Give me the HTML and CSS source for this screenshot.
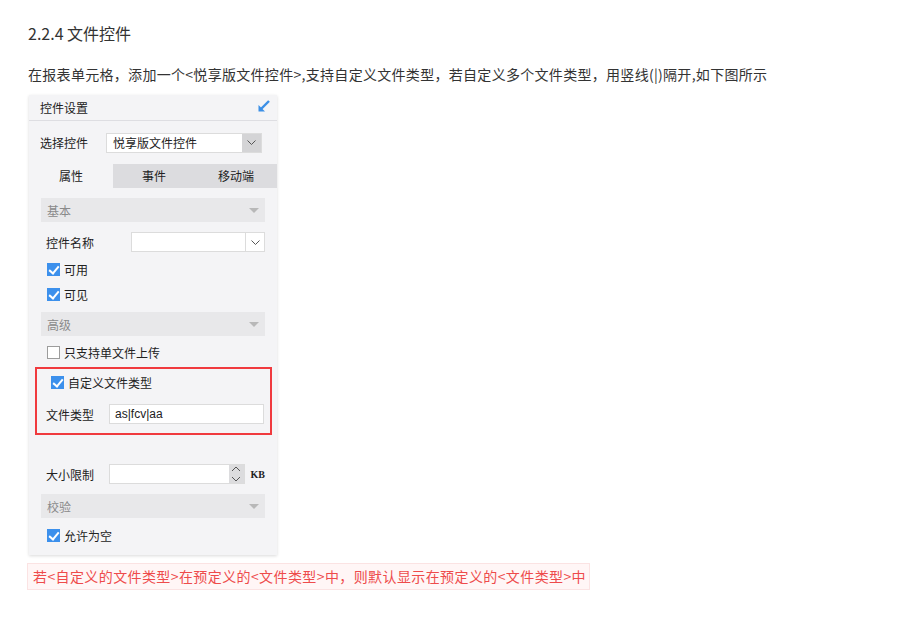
FILE: index.html
```html
<!DOCTYPE html>
<html lang="zh">
<head>
<meta charset="utf-8">
<link rel="stylesheet" href="styles.css">
</head>
<body>
<div class="doc">
  <h3 class="title">2.2.4 文件控件</h3>
  <p class="para">在报表单元格，添加一个&lt;悦享版文件控件&gt;,支持自定义文件类型，若自定义多个文件类型，用竖线(|)隔开,如下图所示</p>
  <div class="panel">
    <div class="panel-head">
      <span>控件设置</span>
      <svg class="arrow" width="14" height="14" viewBox="0 0 14 14"><path d="M12 2 L4 10" stroke="#3b8fe6" stroke-width="2.4" fill="none"/><path d="M1.5 6 L1.5 12.5 L8 12.5 Z" fill="#3b8fe6"/></svg>
    </div>
    <div class="row select-row">
      <span class="lbl">选择控件</span>
      <div class="select">
        <span class="select-text">悦享版文件控件</span>
        <span class="select-btn"><svg width="9" height="5" viewBox="0 0 9 5"><path d="M0.5 0.5 L4.5 4.5 L8.5 0.5" stroke="#555" fill="none"/></svg></span>
      </div>
    </div>
    <div class="tabs">
      <div class="tab active">属性</div>
      <div class="tab mid">事件</div>
      <div class="tab">移动端</div>
    </div>
    <div class="body">
      <div class="section"><span>基本</span><i class="tri"></i></div>
      <div class="row name-row">
        <span class="lbl2">控件名称</span>
        <div class="combo"><span class="combo-in"></span><span class="combo-btn"><svg width="9" height="5" viewBox="0 0 9 5"><path d="M0.5 0.5 L4.5 4.5 L8.5 0.5" stroke="#555" fill="none"/></svg></span></div>
      </div>
      <div class="check-row first"><span class="cb on"></span>可用</div>
      <div class="check-row"><span class="cb on"></span>可见</div>
      <div class="section gap5"><span>高级</span><i class="tri"></i></div>
      <div class="check-row single"><span class="cb"></span>只支持单文件上传</div>
      <div class="redbox">
        <div class="check-row custom"><span class="cb on"></span>自定义文件类型</div>
        <div class="row type-row">
          <span class="lbl3">文件类型</span>
          <div class="text-in">as|fcv|aa</div>
        </div>
      </div>
      <div class="row size-row">
        <span class="lbl3">大小限制</span>
        <div class="spin">
          <span class="spin-in"></span>
          <span class="spin-btn"><svg width="10" height="18" viewBox="0 0 10 18"><path d="M1 6 L5 2 L9 6" stroke="#555" fill="none"/><path d="M1 12 L5 16 L9 12" stroke="#555" fill="none"/></svg></span>
        </div>
        <span class="kb">KB</span>
      </div>
      <div class="section gap10"><span>校验</span><i class="tri"></i></div>
      <div class="check-row last"><span class="cb on"></span>允许为空</div>
    </div>
  </div>
  <div class="note">若&lt;自定义的文件类型&gt;在预定义的&lt;文件类型&gt;中，则默认显示在预定义的&lt;文件类型&gt;中</div>
</div>
</body>
</html>
```
FILE: styles.css
```css
* { box-sizing: border-box; }
html, body { margin: 0; padding: 0; background: #fff; }
body { font-family: "Noto Sans CJK SC", "Noto Sans", sans-serif; color: #333; }
.doc { padding: 0 0 0 28px; }
.title { margin: 0; padding-top: 22px; height: 46px; font-size: 16px; font-weight: normal; line-height: 22px; color: #333; }
.para { margin: 17px 0 0 0; font-size: 14px; line-height: 22px; color: #333; letter-spacing: 0.3px; }
.panel { margin-top: 10px; margin-left: 1px; width: 248px; background: #f4f4f6; box-shadow: 0 1px 3px rgba(0,0,0,0.15); font-size: 12px; color: #222; }
.panel-head { height: 26px; display: flex; align-items: center; justify-content: space-between; padding: 0 6px 0 11px; border-bottom: 1px solid #dedee2; }
.arrow { display: block; margin-top: -3px; }
.row { display: flex; align-items: center; }
.select-row { height: 43px; padding: 0 15px 0 11px; }
.lbl { width: 66px; }
.select { flex: 1; height: 20px; display: flex; background: #fff; border: 1px solid #dcdcdc; }
.select-text { flex: 1; padding-left: 6px; line-height: 18px; }
.select-btn { width: 19px; background: #d4d4d6; display: flex; align-items: center; justify-content: center; }
.tabs { display: flex; height: 24px; }
.tab { line-height: 24px; text-align: center; background: #dcdcdf; flex: 1; }
.tab.active { background: #f4f4f6; flex: 0 0 84px; }
.tab.mid { flex: 0 0 82px; }
.body { padding: 10px 12px 7px 12px; }
.section { height: 24px; background: #e8e8ea; display: flex; align-items: center; justify-content: space-between; padding: 0 6px; color: #8a8a8a; }
.gap5 { margin-top: 5px; }
.gap10 { margin-top: 10px; }
.tri { width: 0; height: 0; border-left: 5px solid transparent; border-right: 5px solid transparent; border-top: 5px solid #b8b8b8; }
.name-row { height: 20px; margin-top: 10px; padding-left: 5px; }
.lbl2 { width: 85px; }
.combo { flex: 1; height: 20px; display: flex; background: #fff; border: 1px solid #dcdcdc; }
.combo-in { flex: 1; }
.combo-btn { width: 19px; border-left: 1px solid #dcdcdc; display: flex; align-items: center; justify-content: center; }
.check-row { display: flex; align-items: center; height: 25px; padding-left: 6px; }
.check-row.first { margin-top: 5px; }
.cb { width: 13px; height: 13px; margin-right: 4px; border: 1px solid #9c9c9c; background: #fff; position: relative; }
.cb.on { background: #3c90ec; border-color: #3c90ec; }
.cb.on::after { content: ""; position: absolute; left: 3px; top: 0px; width: 4px; height: 8px; border: solid #fff; border-width: 0 2px 2px 0; transform: rotate(40deg); }
.single { margin-top: 4px; }
.redbox { margin: 2px -7px 0 -6px; border: 2px solid #f03a3e; padding: 0 0 9px 0; }
.custom { padding-left: 14px; height: 26px; }
.type-row { height: 20px; margin-top: 9px; padding-left: 9px; padding-right: 6px; }
.lbl3 { width: 63px; flex: 0 0 auto; }
.text-in { flex: 1; height: 20px; border: 1px solid #dcdcdc; background: #fff; padding-left: 5px; line-height: 18px; font-family: "Liberation Sans", "Noto Sans", sans-serif; font-size: 12px; color: #222; }
.size-row { height: 20px; margin-top: 29px; padding-left: 5px; }
.spin { width: 139px; height: 20px; display: flex; background: #fff; border: 1px solid #dcdcdc; }
.spin-in { flex: 1; }
.spin-btn { width: 15px; background: #dcdcde; display: flex; align-items: center; justify-content: center; }
.kb { margin-left: 6px; font-family: "Liberation Serif", serif; font-size: 10px; font-weight: bold; color: #222; }
.last { margin-top: 5px; }
.note { margin-top: 8px; margin-left: -1px; width: 563px; height: 27px; background: #fff6f6; border: 1px solid #fbe3e3; color: #ee4b4b; font-size: 14px; line-height: 25px; padding-left: 5px; white-space: nowrap; letter-spacing: 0.4px; }
```
